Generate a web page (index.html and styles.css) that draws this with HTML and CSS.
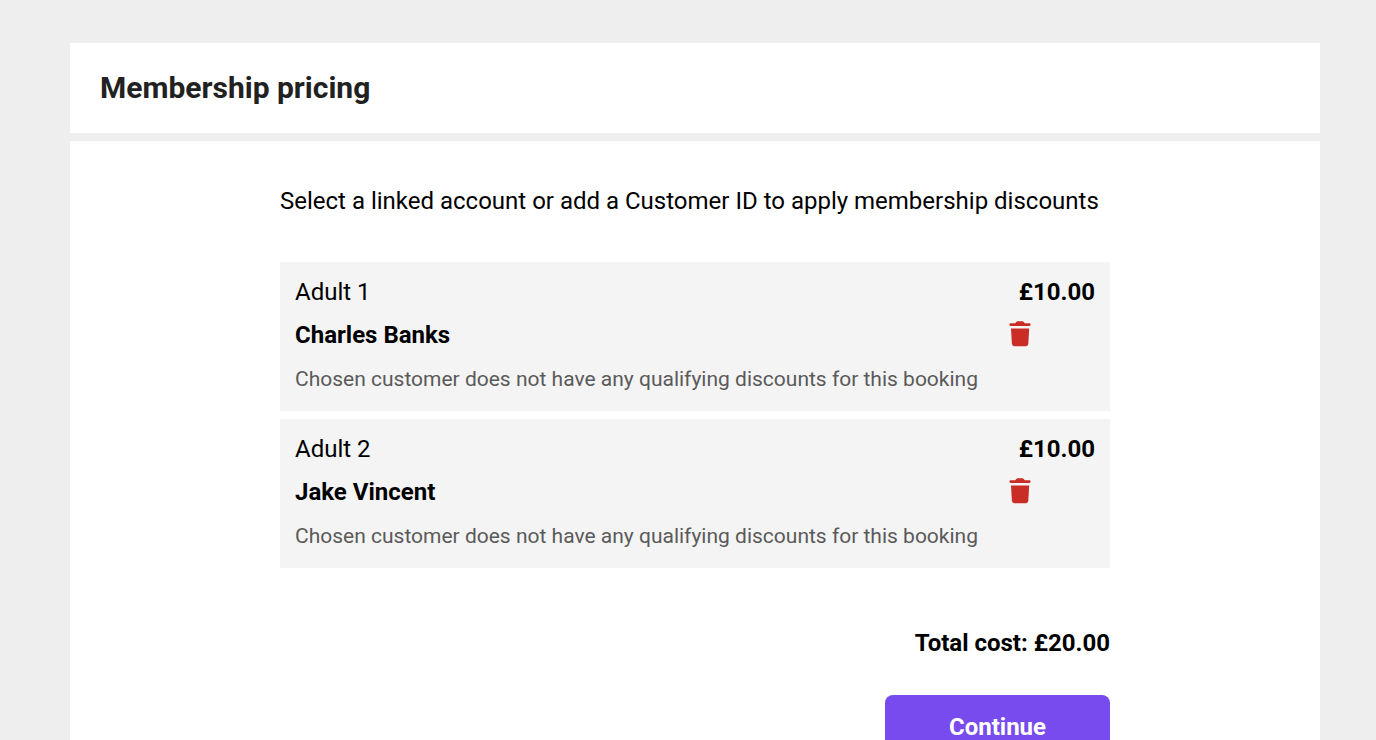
FILE: index.html
```html
<!DOCTYPE html>
<html lang="en">
<head>
    <meta charset="utf-8">
    <meta name="viewport" content="width=device-width, initial-scale=1">
    <title>Membership pricing</title>
    <link rel="stylesheet" href="styles.css">
</head>
<body>
<main class="page">
    <header class="panel page-header">
        <h1>Membership pricing</h1>
    </header>

    <section class="panel pricing">
        <form class="content">
            <p class="intro">Select a linked account or add a Customer ID to apply membership discounts</p>

            <ul class="tickets">
                <li class="ticket">
                    <div class="row">
                        <span>Adult 1</span>
                        <strong>£10.00</strong>
                    </div>
                    <div class="row">
                        <strong>Charles Banks</strong>
                        <button class="remove" type="button" aria-label="Remove Charles Banks">
                            <svg viewBox="0 0 22 28" width="22" height="28" aria-hidden="true">
                                <path d="M1.500 2.200H6.200L7.300 1Q7.700.3 8.500.3h5q.8 0 1.200.7l1.100 1.200h4.700q1.100 0 1.100 1.400T20.500 5h-19Q.4 5 .4 3.600t1.100-1.400zM2 7.500h18.200l-.9 15.300q-.2 2.400-2.300 2.400H5.200q-2.100 0-2.300-2.400z"/>
                            </svg>
                        </button>
                    </div>
                    <p class="note">Chosen customer does not have any qualifying discounts for this booking</p>
                </li>
                <li class="ticket">
                    <div class="row">
                        <span>Adult 2</span>
                        <strong>£10.00</strong>
                    </div>
                    <div class="row">
                        <strong>Jake Vincent</strong>
                        <button class="remove" type="button" aria-label="Remove Jake Vincent">
                            <svg viewBox="0 0 22 28" width="22" height="28" aria-hidden="true">
                                <path d="M1.500 2.200H6.200L7.300 1Q7.700.3 8.500.3h5q.8 0 1.200.7l1.100 1.200h4.700q1.100 0 1.100 1.400T20.500 5h-19Q.4 5 .4 3.600t1.100-1.400zM2 7.500h18.200l-.9 15.300q-.2 2.400-2.300 2.400H5.200q-2.100 0-2.300-2.400z"/>
                            </svg>
                        </button>
                    </div>
                    <p class="note">Chosen customer does not have any qualifying discounts for this booking</p>
                </li>
            </ul>

            <p class="total">Total cost: £20.00</p>
            <button class="continue" type="submit">Continue</button>
        </form>
    </section>
</main>
</body>
</html>
```
FILE: styles.css
```css
* {
    box-sizing: border-box;
}
body {
    margin: 0;
    background-color: #eee;
    color: #000;
    font-family: Roboto, sans-serif;
    font-size: 24px;
    line-height: 30px;
}
h1, p, ul {
    margin: 0;
    padding: 0;
}
.page {
    display: flex;
    flex-direction: column;
    gap: 8px;
    padding: 43px 56px 0 70px;
}
.panel {
    background-color: #fff;
}
.page-header {
    padding: 25px 30px;
}
h1 {
    color: #212121;
    font-size: 30px;
    line-height: 40px;
    font-weight: 700;
}
.pricing {
    padding: 45px 30px;
}
.content {
    display: flex;
    flex-direction: column;
    max-width: 830px;
    margin: 0 auto;
}
.tickets {
    display: flex;
    flex-direction: column;
    gap: 8px;
    margin: 46px 0 60px;
    list-style: none;
}
.ticket {
    display: flex;
    flex-direction: column;
    gap: 13px;
    padding: 15px 15px 16px;
    background-color: #f4f4f4;
}
.row {
    display: flex;
    justify-content: space-between;
    align-items: center;
}
strong {
    font-weight: 700;
}
.remove {
    display: flex;
    margin-right: 64px;
    padding: 0;
    border: none;
    background: none;
    cursor: pointer;
}
.remove svg {
    fill: #c92d25;
}
.note {
    color: #5a5a5a;
    font-size: 21px;
    line-height: 32px;
}
.total {
    font-weight: 700;
    text-align: right;
}
.continue {
    align-self: flex-end;
    width: 225px;
    margin-top: 37px;
    padding: 17px;
    border: none;
    border-radius: 8px;
    background-color: #774bee;
    color: #fff;
    font: inherit;
    font-weight: 700;
    cursor: pointer;
}
```
